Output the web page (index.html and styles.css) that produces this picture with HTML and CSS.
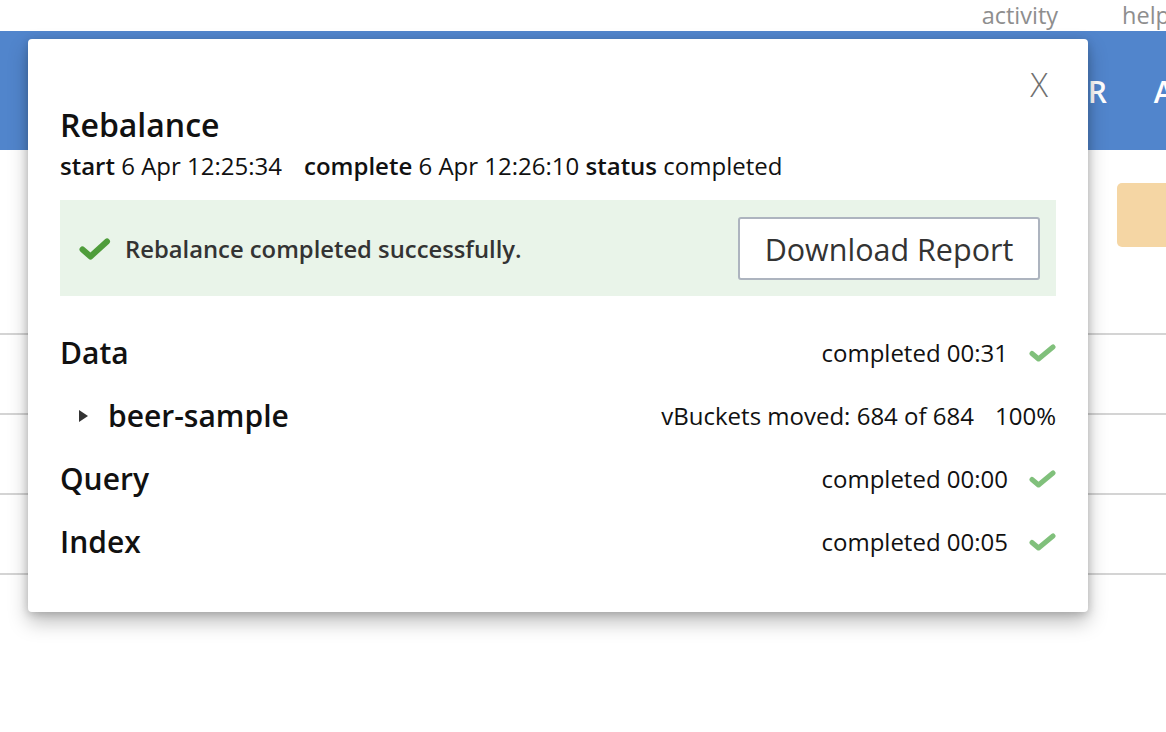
FILE: index.html
```html
<!DOCTYPE html>
<html lang="en">
<head>
<meta charset="utf-8">
<title>Rebalance</title>
<link rel="stylesheet" href="styles.css">
</head>
<body>
<div class="topbar">
  <nav class="toplinks"><a class="toplink">activity</a><a class="toplink">help</a></nav>
</div>
<header class="mainbar">
  <nav class="mainnav"><span class="mainnav-item">XDCR</span><span class="mainnav-item">ANALYTICS</span></nav>
</header>
<main class="page">
  <div class="toolbar"><button class="orange-btn" aria-label="Rebalance"></button></div>
  <ul class="server-list">
    <li class="server-row"></li>
    <li class="server-row"></li>
    <li class="server-row"></li>
    <li class="server-row"></li>
  </ul>
</main>

<section class="dialog">
  <div class="dialog-close-row"><button class="dialog-close">X</button></div>
  <h2 class="dialog-title">Rebalance</h2>
  <p class="dialog-meta"><span class="meta-item meta-first"><b>start</b> 6 Apr 12:25:34</span><span class="meta-item"><b>complete</b> 6 Apr 12:26:10</span> <span class="meta-item"><b>status</b> completed</span></p>

  <div class="banner">
    <div class="banner-msg">
      <svg class="banner-check" width="32" height="22" viewBox="0 0 32 22"><polyline points="3.5,11.5 11.5,18.5 28,3.5" fill="none" stroke="#4f9d3b" stroke-width="6" stroke-linecap="round" stroke-linejoin="round"/></svg>
      <span class="banner-text">Rebalance completed successfully.</span>
    </div>
    <button class="report-btn">Download Report</button>
  </div>

  <div class="rows">
    <div class="row">
      <span class="row-label">Data</span>
      <span class="row-status">completed 00:31<svg class="row-check" width="27" height="18" viewBox="0 0 27 18"><polyline points="3,9.5 9.5,15 24,3" fill="none" stroke="#80c07b" stroke-width="5" stroke-linecap="round" stroke-linejoin="round"/></svg></span>
    </div>
    <div class="row row-sub">
      <span class="row-label"><span class="caret"></span>beer-sample</span>
      <span class="row-status"><span>vBuckets moved: 684 of 684</span><span>100%</span></span>
    </div>
    <div class="row">
      <span class="row-label">Query</span>
      <span class="row-status">completed 00:00<svg class="row-check" width="27" height="18" viewBox="0 0 27 18"><polyline points="3,9.5 9.5,15 24,3" fill="none" stroke="#80c07b" stroke-width="5" stroke-linecap="round" stroke-linejoin="round"/></svg></span>
    </div>
    <div class="row">
      <span class="row-label">Index</span>
      <span class="row-status">completed 00:05<svg class="row-check" width="27" height="18" viewBox="0 0 27 18"><polyline points="3,9.5 9.5,15 24,3" fill="none" stroke="#80c07b" stroke-width="5" stroke-linecap="round" stroke-linejoin="round"/></svg></span>
    </div>
  </div>
</section>
</body>
</html>
```

FILE: styles.css
```css
html, body {
  margin: 0;
  padding: 0;
  overflow: hidden;
  width: 1166px;
  height: 732px;
  background: #ffffff;
  font-family: "Open Sans", "DejaVu Sans", sans-serif;
}

/* top utility bar */
.topbar {
  height: 31px;
  overflow: hidden;
}
.toplinks {
  display: flex;
  justify-content: flex-end;
  gap: 64px;
  margin-right: -4px;
}
.toplink {
  font-size: 23.5px;
  line-height: 30px;
  color: #8e8e8e;
  flex-shrink: 0;
}

/* blue main bar */
.mainbar {
  height: 119px;
  background: #5185cc;
  display: flex;
  align-items: center;
  padding-top: 3px;
  box-sizing: border-box;
  overflow: hidden;
}
.mainnav {
  display: flex;
  gap: 47px;
  padding-left: 1028px;
}
.mainnav-item {
  flex-shrink: 0;
  white-space: nowrap;
  color: #ffffff;
  font-size: 30px;
  font-weight: 600;
  line-height: 40px;
}

/* page behind the dialog */
.page {
  display: block;
}
.toolbar {
  display: flex;
  justify-content: flex-end;
  margin-top: 33px;
  height: 64px;
}
.orange-btn {
  width: 120px;
  height: 64px;
  margin-right: -71px;
  border: none;
  border-radius: 5px;
  background: #f5d6a4;
  flex-shrink: 0;
}
.server-list {
  list-style: none;
  margin: 8px 0 0;
  padding: 0;
}
.server-row {
  height: 78px;
  border-bottom: 2px solid #d4d4d4;
}

/* dialog */
.dialog {
  position: absolute;
  left: 28px;
  top: 39px;
  width: 1060px;
  height: 573px;
  box-sizing: border-box;
  padding: 0 32px;
  background: #ffffff;
  border-radius: 4px;
  box-shadow: 0 10px 20px rgba(0, 0, 0, 0.26), 0 2px 8px rgba(0, 0, 0, 0.18);
  color: #111111;
}
.dialog-close-row {
  display: flex;
  justify-content: flex-end;
  padding-top: 23px;
}
.dialog-close {
  margin: 0 8px 0 0;
  padding: 0;
  border: none;
  background: none;
  font-family: inherit;
  font-size: 33px;
  font-weight: 300;
  line-height: 45px;
  color: #707070;
}
.dialog-title {
  margin: 0;
  font-size: 32px;
  font-weight: 600;
  line-height: 36px;
  color: #111111;
}
.dialog-meta {
  margin: 9px 0 0;
  font-size: 24px;
  line-height: 28px;
  color: #111111;
}
.dialog-meta b {
  font-weight: 600;
}
.meta-first {
  margin-right: 22px;
}

/* success banner */
.banner {
  margin-top: 20px;
  height: 96px;
  box-sizing: border-box;
  padding: 1px 16px 0 19px;
  background: #e9f4e9;
  display: flex;
  align-items: center;
  justify-content: space-between;
}
.banner-msg {
  display: flex;
  align-items: center;
  gap: 14px;
}
.banner-check {
  display: block;
}
.banner-text {
  font-size: 23.8px;
  font-weight: 600;
  line-height: 30px;
  color: #333333;
}
.report-btn {
  width: 302px;
  height: 63px;
  box-sizing: border-box;
  border: 2px solid #adb4bf;
  border-radius: 3px;
  background: #ffffff;
  font-family: inherit;
  font-size: 30.5px;
  color: #333333;
  padding: 0;
}

/* progress rows */
.rows {
  margin-top: 25px;
}
.row {
  height: 63px;
  display: flex;
  align-items: center;
  justify-content: space-between;
}
.row-label {
  display: flex;
  align-items: center;
  font-size: 30px;
  font-weight: 600;
  line-height: 38px;
}
.row-sub {
  padding-left: 19px;
}
.caret {
  width: 0;
  height: 0;
  border-left: 9px solid #333333;
  border-top: 6.5px solid transparent;
  border-bottom: 6.5px solid transparent;
  margin-right: 20px;
}
.row-status {
  display: flex;
  align-items: center;
  gap: 21px;
  font-size: 24px;
  line-height: 32px;
  color: #111111;
}
.row-check {
  display: block;
}
```
